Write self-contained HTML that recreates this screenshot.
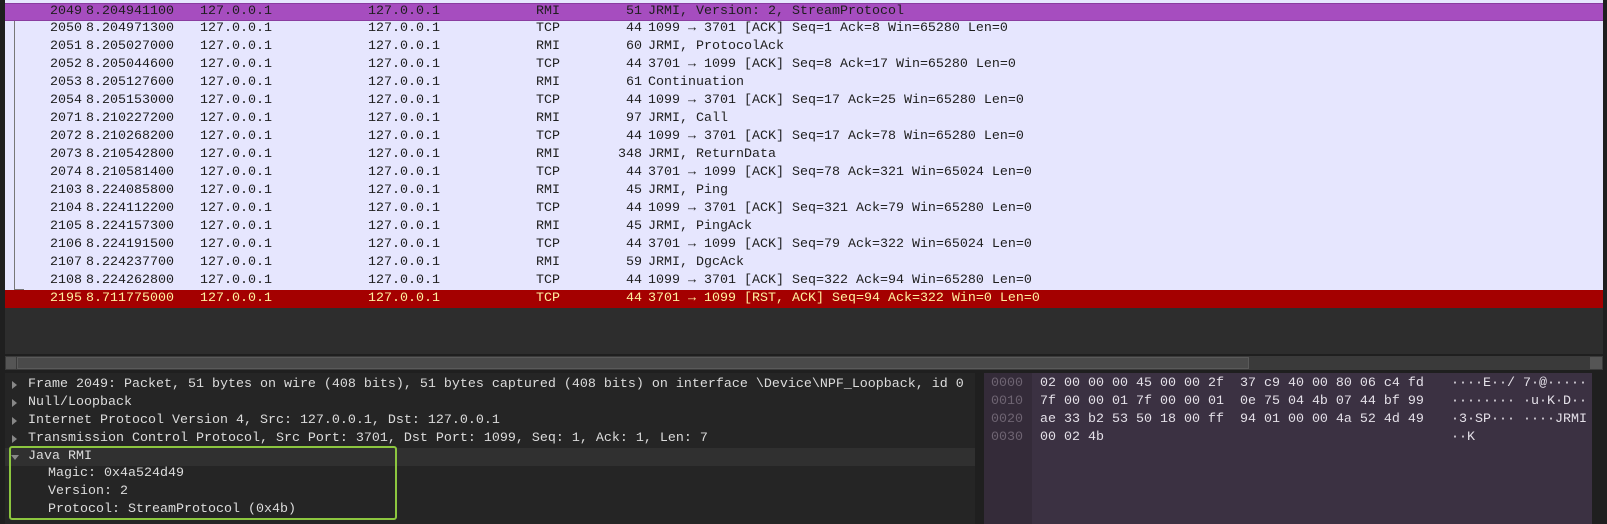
<!DOCTYPE html>
<html><head><meta charset="utf-8"><style>
*{margin:0;padding:0;box-sizing:border-box}
body{width:1607px;height:524px;background:#1f1f1f;overflow:hidden;position:relative;font-family:"Liberation Mono","DejaVu Sans Mono",monospace;font-size:13.33px}
.abs{position:absolute}
#list{left:5px;top:0;width:1598px;height:354px;background:#2d2d2d}
#rows{left:5px;top:0;width:1598px;height:308px;background:#e6e6fe}
.r{position:absolute;left:0;width:1598px;height:18px;line-height:18px;color:#1e1e1e;white-space:pre}
.r span{position:absolute;top:0}
.sel{background:#a64dbf;border-top:1px solid #8a3ca0;border-bottom:1px solid #8a3ca0;line-height:16px}
.bad{background:#a40000;color:#fff0a0}
.d{position:absolute;left:28px;height:18px;line-height:18px;color:#dcdcdc;white-space:pre}
.tri{position:absolute;left:12px;width:0;height:0;border-top:4px solid transparent;border-bottom:4px solid transparent;border-left:5px solid #888}
.h{position:absolute;height:18px;line-height:18px;white-space:pre;color:#e4e0e8}
</style></head><body>
<div class="abs" id="list"></div>
<div class="abs" id="rows">
<div class="abs" style="left:9px;top:10px;width:1px;height:280px;background:#777"></div>
<div class="abs" style="left:9px;top:289px;width:10px;height:1px;background:#777"></div>
</div>
<div id="rl"></div>
<div class="abs" style="left:5px;top:356px;width:1598px;height:14px;background:#3a3a3a"></div>
<div class="abs" style="left:6px;top:357px;width:10px;height:12px;background:#555"></div>
<div class="abs" style="left:17px;top:357px;width:1232px;height:12px;background:#4a4a4a;border:1px solid #5a5a5a"></div>
<div class="abs" style="left:1590px;top:357px;width:12px;height:12px;background:#555"></div>
<div class="abs" style="left:5px;top:373px;width:970px;height:151px;background:#252525"></div>
<div class="abs" style="left:5px;top:448px;width:970px;height:18px;background:#303030"></div>
<div class="abs" style="left:984px;top:373px;width:608px;height:151px;background:#3b3142"></div>
<div class="abs" style="left:984px;top:373px;width:48px;height:151px;background:#342b39"></div>
<div class="tri" style="top:381px"></div><div class="d" style="top:376px">Frame 2049: Packet, 51 bytes on wire (408 bits), 51 bytes captured (408 bits) on interface \Device\NPF_Loopback, id 0</div>
<div class="tri" style="top:399px"></div><div class="d" style="top:394px">Null/Loopback</div>
<div class="tri" style="top:417px"></div><div class="d" style="top:412px">Internet Protocol Version 4, Src: 127.0.0.1, Dst: 127.0.0.1</div>
<div class="tri" style="top:435px"></div><div class="d" style="top:430px">Transmission Control Protocol, Src Port: 3701, Dst Port: 1099, Seq: 1, Ack: 1, Len: 7</div>
<div class="abs" style="left:11px;top:455px;border-left:4px solid transparent;border-right:4px solid transparent;border-top:5px solid #888"></div>
<div class="d" style="top:448px">Java RMI</div>
<div class="d" style="top:465px;left:48px">Magic: 0x4a524d49</div>
<div class="d" style="top:483px;left:48px">Version: 2</div>
<div class="d" style="top:501px;left:48px">Protocol: StreamProtocol (0x4b)</div>
<div class="abs" style="left:9px;top:446px;width:388px;height:74px;border:2px solid #8cc63f;border-radius:3px"></div>
<div class="h" style="left:991px;top:375px;color:#6e6472">0000
0010
0020
0030</div>
<div class="h" style="left:1040px;top:375px">02 00 00 00 45 00 00 2f  37 c9 40 00 80 06 c4 fd
7f 00 00 01 7f 00 00 01  0e 75 04 4b 07 44 bf 99
ae 33 b2 53 50 18 00 ff  94 01 00 00 4a 52 4d 49
00 02 4b</div>
<div class="h" style="left:1451px;top:375px">····E··/ 7·@·····
········ ·u·K·D··
·3·SP··· ····JRMI
··K</div>
<script>
var d=[["2049","8.204941100","RMI","51","JRMI, Version: 2, StreamProtocol"],
["2050","8.204971300","TCP","44","1099 → 3701 [ACK] Seq=1 Ack=8 Win=65280 Len=0"],
["2051","8.205027000","RMI","60","JRMI, ProtocolAck"],
["2052","8.205044600","TCP","44","3701 → 1099 [ACK] Seq=8 Ack=17 Win=65280 Len=0"],
["2053","8.205127600","RMI","61","Continuation"],
["2054","8.205153000","TCP","44","1099 → 3701 [ACK] Seq=17 Ack=25 Win=65280 Len=0"],
["2071","8.210227200","RMI","97","JRMI, Call"],
["2072","8.210268200","TCP","44","1099 → 3701 [ACK] Seq=17 Ack=78 Win=65280 Len=0"],
["2073","8.210542800","RMI","348","JRMI, ReturnData"],
["2074","8.210581400","TCP","44","3701 → 1099 [ACK] Seq=78 Ack=321 Win=65024 Len=0"],
["2103","8.224085800","RMI","45","JRMI, Ping"],
["2104","8.224112200","TCP","44","1099 → 3701 [ACK] Seq=321 Ack=79 Win=65280 Len=0"],
["2105","8.224157300","RMI","45","JRMI, PingAck"],
["2106","8.224191500","TCP","44","3701 → 1099 [ACK] Seq=79 Ack=322 Win=65024 Len=0"],
["2107","8.224237700","RMI","59","JRMI, DgcAck"],
["2108","8.224262800","TCP","44","1099 → 3701 [ACK] Seq=322 Ack=94 Win=65280 Len=0"],
["2195","8.711775000","TCP","44","3701 → 1099 [RST, ACK] Seq=94 Ack=322 Win=0 Len=0"]];
var h="";
d.forEach(function(r,i){var c=i==0?"r sel":(i==16?"r bad":"r");
h+='<div class="'+c+'" style="left:5px;top:'+(2.5+i*17.95)+'px"><span style="left:45px">'+r[0]+'</span><span style="left:81px">'+r[1]+'</span><span style="left:195px">127.0.0.1</span><span style="left:363px">127.0.0.1</span><span style="left:531px">'+r[2]+'</span><span style="left:'+(637-r[3].length*8)+'px">'+r[3]+'</span><span style="left:643px">'+r[4]+'</span></div>';});
document.getElementById("rl").innerHTML=h;
</script>
</body></html>
